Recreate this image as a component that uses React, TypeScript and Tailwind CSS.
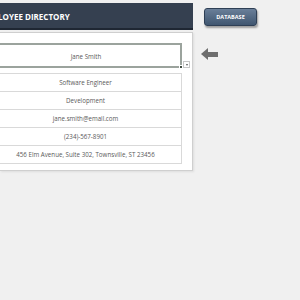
const rows = [
  "Software Engineer",
  "Development",
  "jane.smith@email.com",
  "(234)-567-8901",
  "456 Elm Avenue, Suite 302, Townsville, ST 23456",
];

export default function App() {
  return (
    <div className="w-[300px] h-[300px] bg-[#f0f0f0] overflow-hidden font-['Open_Sans',_'Liberation_Sans',_sans-serif]">
      <div className="flex items-start pt-[3px]">
        <div className="w-[193px] h-[27px] bg-[#354050] border-b-2 border-[#1f2733] flex items-center pt-[3px] overflow-hidden">
          <span className="ml-[-19px] text-white font-bold text-[8px] whitespace-nowrap">
            EMPLOYEE DIRECTORY
          </span>
        </div>
        <button className="ml-[11px] mt-[5px] w-[53px] h-[18px] rounded-[3px] bg-gradient-to-b from-[#6a7f99] to-[#405670] border border-[#2e3f55] shadow-[1px_2px_2px_rgba(0,0,0,0.35)] text-white text-[5.5px] font-bold">
          DATABASE
        </button>
      </div>
      <div className="flex items-start mt-[2px]">
        <div className="w-[193px] h-[139px] bg-white border border-[#cfcfcf] border-l-0 shadow-[1px_1px_2px_rgba(0,0,0,0.08)] pt-[10px]">
          <div className="flex items-end">
            <div className="relative ml-[-10px] w-[192px] h-[25px] border-2 border-[#9ba39d] flex items-center justify-center pt-[3px] text-[6.2px] text-[#595959]">
              Jane Smith
              <div className="absolute right-[-3px] bottom-[-3px] w-[4px] h-[4px] bg-[#3f4a40] border border-white" />
            </div>
            <div className="ml-[1px] w-[7px] h-[7px] bg-white border border-[#c8c8c8] flex items-center justify-center">
              <div className="w-0 h-0 border-l-[1.5px] border-r-[1.5px] border-t-[2px] border-l-transparent border-r-transparent border-t-[#555]" />
            </div>
          </div>
          <div className="mt-[5px] ml-[-10px] w-[192px] border-t border-[#d9d9d9]">
            {rows.map((r) => (
              <div
                key={r}
                className="h-[18px] border-b border-r border-[#d9d9d9] flex items-center justify-center pt-[1px] text-[6.2px] text-[#595959] whitespace-nowrap"
              >
                {r}
              </div>
            ))}
          </div>
        </div>
        <div className="ml-[8px] mt-[16px] flex items-center">
          <div className="w-0 h-0 border-t-[6px] border-b-[6px] border-r-[7px] border-t-transparent border-b-transparent border-r-[#6e6e6e]" />
          <div className="w-[10px] h-[5px] bg-[#6e6e6e]" />
        </div>
      </div>
    </div>
  );
}
